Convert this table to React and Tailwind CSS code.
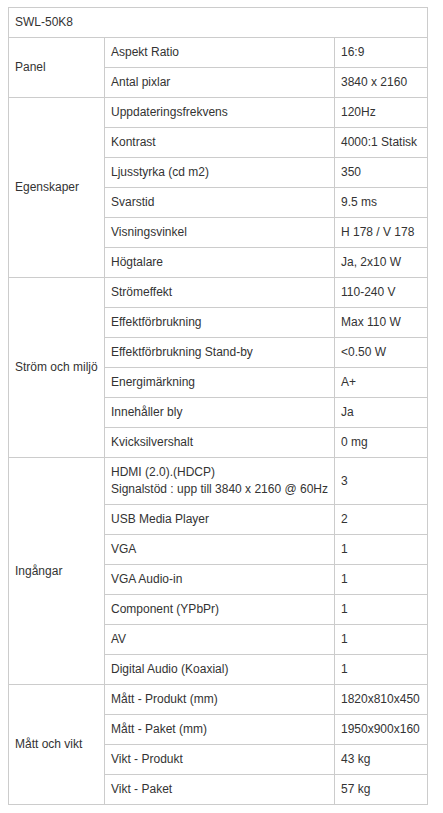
const groups = [
  {
    name: 'Panel',
    rows: [
      ['Aspekt Ratio', '16:9'],
      ['Antal pixlar', '3840 x 2160'],
    ],
  },
  {
    name: 'Egenskaper',
    rows: [
      ['Uppdateringsfrekvens', '120Hz'],
      ['Kontrast', '4000:1 Statisk'],
      ['Ljusstyrka (cd m2)', '350'],
      ['Svarstid', '9.5 ms'],
      ['Visningsvinkel', 'H 178 / V 178'],
      ['Högtalare', 'Ja, 2x10 W'],
    ],
  },
  {
    name: 'Ström och miljö',
    rows: [
      ['Strömeffekt', '110-240 V'],
      ['Effektförbrukning', 'Max 110 W'],
      ['Effektförbrukning Stand-by', '<0.50 W'],
      ['Energimärkning', 'A+'],
      ['Innehåller bly', 'Ja'],
      ['Kvicksilvershalt', '0 mg'],
    ],
  },
  {
    name: 'Ingångar',
    rows: [
      [['HDMI (2.0).(HDCP)', 'Signalstöd : upp till 3840 x 2160 @ 60Hz'], '3'],
      ['USB Media Player', '2'],
      ['VGA', '1'],
      ['VGA Audio-in', '1'],
      ['Component (YPbPr)', '1'],
      ['AV', '1'],
      ['Digital Audio (Koaxial)', '1'],
    ],
  },
  {
    name: 'Mått och vikt',
    rows: [
      ['Mått - Produkt (mm)', '1820x810x450'],
      ['Mått - Paket (mm)', '1950x900x160'],
      ['Vikt - Produkt', '43 kg'],
      ['Vikt - Paket', '57 kg'],
    ],
  },
];

const cell = 'border border-[#cccccc] px-[6px] py-[6px] text-left align-middle';

export default function App() {
  return (
    <div className="min-h-screen bg-white pl-2 pt-[7px] font-['Liberation_Sans',Arial,sans-serif] text-[12px] leading-[17px] text-[#333333]">
      <table className="w-[419px] table-fixed border-collapse">
        <colgroup>
          <col className="w-[96px]" />
          <col className="w-[230px]" />
          <col className="w-[93px]" />
        </colgroup>
        <tbody>
          <tr>
            <td colSpan={3} className={cell}>SWL-50K8</td>
          </tr>
          {groups.map((g) =>
            g.rows.map(([label, value], i) => (
              <tr key={g.name + i}>
                {i === 0 && (
                  <td rowSpan={g.rows.length} className={`${cell} whitespace-nowrap`}>
                    {g.name}
                  </td>
                )}
                <td className={`${cell} whitespace-nowrap`}>
                  {Array.isArray(label) ? (
                    <>
                      {label[0]}
                      <br />
                      {label[1]}
                    </>
                  ) : (
                    label
                  )}
                </td>
                <td className={`${cell} whitespace-nowrap`}>{value}</td>
              </tr>
            ))
          )}
        </tbody>
      </table>
    </div>
  );
}
